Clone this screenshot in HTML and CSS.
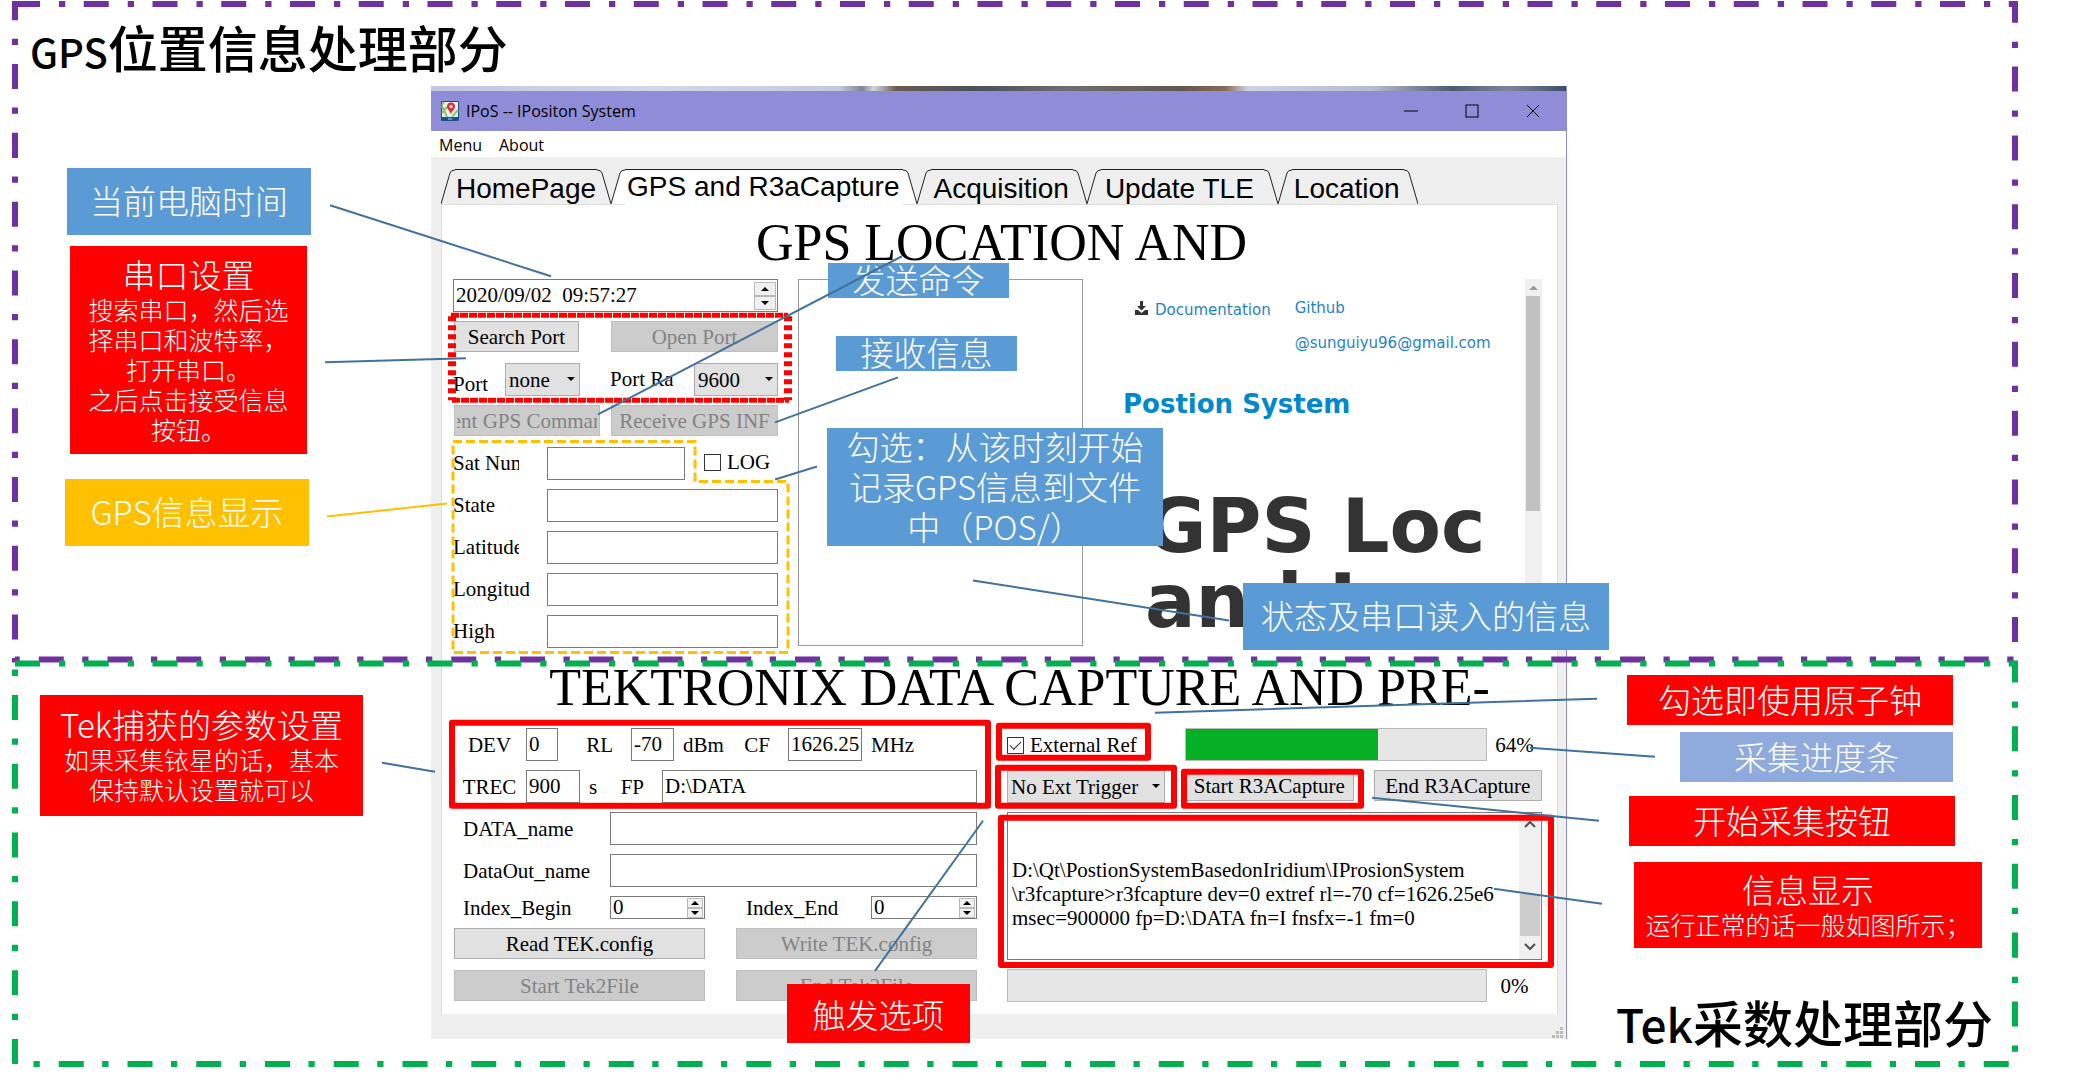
FILE: index.html
```html
<!DOCTYPE html>
<html lang="zh-CN">
<head>
<meta charset="utf-8">
<title>IPoS -- IPositon System</title>
<link rel="stylesheet" href="styles.css">
</head>
<body>
<main class="slide">
  <aside class="notes notes-left">
    <h1 class="heading"><span class="latin">GPS</span>位置信息处理部分</h1>
    <div class="callout blue time-note">当前电脑时间</div>
    <div class="callout red serial-note">串口设置<small>搜索串口，然后选<br>择串口和波特率，<br>打开串口。<br>之后点击接受信息<br>按钮。</small></div>
    <div class="callout yellow gps-note">GPS信息显示</div>
    <div class="callout red tek-note">Tek捕获的参数设置<small>如果采集铱星的话，基本<br>保持默认设置就可以</small></div>
  </aside>

  <div class="window">
    <div class="desktop-strip"></div>
    <header class="titlebar">
      <svg class="app-icon" viewBox="0 0 18 20" aria-hidden="true">
        <rect width="18" height="20" rx="1" fill="#1d4f86"/>
        <rect x="1" y="1" width="16" height="15" fill="#eaf3ee"/>
        <path d="M1 5l5 11M3 1l-2 3M17 9l-6 7M1 12l5-6" stroke="#8cc76a" stroke-width="2" fill="none"/>
        <path d="M10 13C8 9 6 8 6 5.500a4 4 0 0 1 8 0C14 8 11 10 10 13z" fill="#e0313c"/>
        <circle cx="10" cy="5.500" r="1.500" fill="#fff"/>
        <rect x="7" y="17" width="4" height="2" fill="#4f9bd8"/>
      </svg>
      <span class="window-title">IPoS -- IPositon System</span>
      <div class="window-controls">
        <button aria-label="Minimize"><svg viewBox="0 0 14 14"><path d="M0 7h14"/></svg></button>
        <button aria-label="Maximize"><svg viewBox="0 0 14 14"><rect x="1" y="1" width="12" height="12"/></svg></button>
        <button aria-label="Close"><svg viewBox="0 0 14 14"><path d="M1 1l12 12M13 1L1 13"/></svg></button>
      </div>
    </header>
    <nav class="menubar"><button>Menu</button><button>About</button></nav>

    <div class="tabs" role="tablist">
      <button class="tab first" role="tab"><svg viewBox="0 0 14 35"><path d="M0 35L9 4Q10 1 14 1V35z"/><path class="edge" d="M0 35L9 4Q10 1 14 1"/></svg><span>HomePage</span><svg viewBox="0 0 14 35"><path d="M14 35L5 4Q4 1 0 1V35z"/><path class="edge" d="M14 35L5 4Q4 1 0 1"/></svg></button>
      <button class="tab active" role="tab" aria-selected="true"><svg viewBox="0 0 14 35"><path d="M0 35L9 4Q10 1 14 1V35z"/><path class="edge" d="M0 35L9 4Q10 1 14 1"/></svg><span>GPS and R3aCapture</span><svg viewBox="0 0 14 35"><path d="M14 35L5 4Q4 1 0 1V35z"/><path class="edge" d="M14 35L5 4Q4 1 0 1"/></svg></button>
      <button class="tab" role="tab"><svg viewBox="0 0 14 35"><path d="M0 35L9 4Q10 1 14 1V35z"/><path class="edge" d="M0 35L9 4Q10 1 14 1"/></svg><span>Acquisition</span><svg viewBox="0 0 14 35"><path d="M14 35L5 4Q4 1 0 1V35z"/><path class="edge" d="M14 35L5 4Q4 1 0 1"/></svg></button>
      <button class="tab roomy" role="tab"><svg viewBox="0 0 14 35"><path d="M0 35L9 4Q10 1 14 1V35z"/><path class="edge" d="M0 35L9 4Q10 1 14 1"/></svg><span>Update TLE</span><svg viewBox="0 0 14 35"><path d="M14 35L5 4Q4 1 0 1V35z"/><path class="edge" d="M14 35L5 4Q4 1 0 1"/></svg></button>
      <button class="tab" role="tab"><svg viewBox="0 0 14 35"><path d="M0 35L9 4Q10 1 14 1V35z"/><path class="edge" d="M0 35L9 4Q10 1 14 1"/></svg><span>Location</span><svg viewBox="0 0 14 35"><path d="M14 35L5 4Q4 1 0 1V35z"/><path class="edge" d="M14 35L5 4Q4 1 0 1"/></svg></button>
    </div>

    <div class="pane">
      <h2 class="title gps-title">GPS LOCATION AND</h2>
      <section class="gps">
        <form class="stack">
          <div class="row spin"><input type="text" aria-label="Date and time" value="2020/09/02&nbsp; 09:57:27"><span class="steps"><button type="button" class="up" aria-label="Later"></button><button type="button" class="down" aria-label="Earlier"></button></span></div>
          <div class="row ports"><button type="button" class="btn search">Search Port</button><button type="button" class="btn wide" disabled>Open Port</button></div>
          <div class="row">
            <label class="port-label" for="port">Port</label>
            <span class="select port"><select id="port"><option>none</option></select></span>
            <label class="rate-label" for="rate">Port Rate</label>
            <span class="select rate"><select id="rate"><option>9600</option></select></span>
          </div>
          <div class="row commands"><button type="button" class="btn send" disabled><span class="clip">Sent GPS Command</span></button><button type="button" class="btn wide" disabled>Receive GPS INF</button></div>
          <div class="row"><label class="name" for="sat"><span>Sat Num</span></label><input class="field sat" id="sat" type="text"><label class="check log"><input type="checkbox">LOG</label></div>
          <div class="row"><label class="name" for="state"><span>State</span></label><input class="field grow" id="state" type="text"></div>
          <div class="row"><label class="name" for="lat"><span>Latitude</span></label><input class="field grow" id="lat" type="text"></div>
          <div class="row"><label class="name" for="lon"><span class="long">Longitude</span></label><input class="field grow" id="lon" type="text"></div>
          <div class="row"><label class="name" for="high"><span>High</span></label><input class="field grow" id="high" type="text"></div>
        </form>
        <textarea class="serial-log" aria-label="Serial log"></textarea>
        <div class="web">
          <div class="web-page">
            <div class="links">
              <a href="#documentation"><svg viewBox="0 0 13 14" aria-hidden="true"><path d="M5 0h3v5h3L6.500 9.500 2 5h3zM0 9h3l3.500 3L10 9h3v5H0z" fill="#333"/></svg>Documentation</a>
              <div class="contact"><a href="#github">Github</a><a href="#mail">@sunguiyu96@gmail.com</a></div>
            </div>
            <a class="brand" href="#system">Postion System</a>
            <p class="hero">GPS Loc<br>and I</p>
          </div>
          <div class="web-scroll"><i></i><b></b></div>
        </div>
      </section>

      <h2 class="title tek-title">TEKTRONIX DATA CAPTURE AND PRE-</h2>
      <section class="tek">
        <form class="stack">
          <div class="row">
            <label class="lead" for="dev">DEV</label><input class="field w-dev" id="dev" type="text" value="0">
            <label class="tag tag-rl" for="rl">RL</label><input class="field w-rl" id="rl" type="text" value="-70"><span class="unit unit-dbm">dBm</span>
            <label class="tag" for="cf">CF</label><input class="field w-cf" id="cf" type="text" value="1626.25"><span class="unit">MHz</span>
          </div>
          <div class="row">
            <label class="lead" for="trec">TREC</label><input class="field w-trec" id="trec" type="text" value="900"><span class="unit unit-s">s</span>
            <label class="tag" for="fp">FP</label><input class="field grow" id="fp" type="text" value="D:\DATA">
          </div>
          <div class="row"><label class="file" for="data">DATA_name</label><input class="field grow" id="data" type="text"></div>
          <div class="row"><label class="file" for="out">DataOut_name</label><input class="field grow" id="out" type="text"></div>
          <div class="row short">
            <label class="file" for="begin">Index_Begin</label><div class="spin small begin"><input id="begin" type="text" value="0"><span class="steps"><button type="button" class="up" aria-label="Increase begin"></button><button type="button" class="down" aria-label="Decrease begin"></button></span></div>
            <label class="end-label" for="end">Index_End</label><div class="spin small grow"><input id="end" type="text" value="0"><span class="steps"><button type="button" class="up" aria-label="Increase end"></button><button type="button" class="down" aria-label="Decrease end"></button></span></div>
          </div>
          <div class="row pair"><button type="button" class="btn">Read TEK.config</button><button type="button" class="btn" disabled>Write TEK.config</button></div>
          <div class="row pair"><button type="button" class="btn" disabled>Start Tek2File</button><button type="button" class="btn" disabled>End Tek2File</button></div>
        </form>
        <div class="stack">
          <div class="row capture"><label class="check"><input type="checkbox" checked>External Ref</label><progress max="100" value="64" aria-label="Capture progress"></progress><span class="percent">64%</span></div>
          <div class="row actions"><span class="select"><select aria-label="Trigger"><option>No Ext Trigger</option></select></span><button type="button" class="btn">Start R3ACapture</button><button type="button" class="btn">End R3ACapture</button></div>
          <div class="console">
            <pre>D:\Qt\PostionSystemBasedonIridium\IProsionSystem
\r3fcapture&gt;r3fcapture dev=0 extref rl=-70 cf=1626.25e6
msec=900000 fp=D:\DATA fn=I fnsfx=-1 fm=0</pre>
            <div class="console-scroll"><svg viewBox="0 0 12 8"><path d="M1 7l5-5 5 5"/></svg><b></b><svg viewBox="0 0 12 8"><path d="M1 1l5 5 5-5"/></svg></div>
          </div>
          <div class="row convert"><progress max="100" value="0" aria-label="Conversion progress"></progress><span class="percent">0%</span></div>
        </div>
      </section>
    </div>
    <footer class="statusbar"><svg viewBox="0 0 12 12" aria-hidden="true"><path d="M8 0h3v3H8zM4 4h3v3H4zM8 4h3v3H8zM0 8h3v3H0zM4 8h3v3H4zM8 8h3v3H8z" fill="#bdbdbd"/></svg></footer>

    <div class="callout blue over send-note">发送命令</div>
    <div class="callout blue over receive-note">接收信息</div>
    <div class="callout blue over log-note">勾选：从该时刻开始<br>记录GPS信息到文件<br>中（POS/）</div>
    <div class="callout blue over status-note">状态及串口读入的信息</div>
    <div class="callout red over trigger-note">触发选项</div>
  </div>

  <aside class="notes notes-right">
    <div class="callout red clock-note">勾选即使用原子钟</div>
    <div class="callout pale progress-note">采集进度条</div>
    <div class="callout red start-note">开始采集按钮</div>
    <div class="callout red info-note">信息显示<small>运行正常的话一般如图所示；</small></div>
    <h1 class="heading"><span class="latin">Tek</span>采数处理部分</h1>
  </aside>

  <svg class="marks" viewBox="0 0 2086 1080" preserveAspectRatio="none" aria-hidden="true">
    <g fill="none">
      <g stroke-width="6" stroke-dasharray="100 76 25 74">
        <rect x="15" y="4" width="2000" height="655" pathLength="21240" stroke="#7030a0"/>
        <rect x="15" y="663" width="2000" height="400" pathLength="19200" stroke="#00b050"/>
      </g>
      <g stroke="#ff0000" stroke-width="6" stroke-linejoin="round">
        <rect x="452" y="722" width="536" height="83"/>
        <rect x="999" y="725" width="149" height="32"/>
        <rect x="998" y="767" width="176" height="38"/>
        <rect x="1184" y="771" width="177" height="34"/>
        <rect x="1001" y="817" width="550" height="147"/>
      </g>
      <g stroke="#ff0000">
        <path d="M451 315H788M452 400H789" stroke-width="5" stroke-dasharray="8 1"/>
        <path d="M452 316V400M788 316V400" stroke-width="8" stroke-dasharray="5 4"/>
      </g>
      <path d="M453 441H695V481H788V652H453z" stroke="#ffc000" stroke-width="3" stroke-dasharray="9 4"/>
      <path d="M327 516L447 503" stroke="#ffc000" stroke-width="2"/>
      <path d="M330 205L551 276M325 362L466 358M598 414L902 256M775 422L898 377M775 479L817 466M973 580L1229 620M382 762L435 771M1155 712L1597 698M1530 747L1655 756M1372 797L1599 820M1494 888L1602 903M875 970L983 820" stroke="#41719c" stroke-width="2"/>
    </g>
  </svg>
</main>
</body>
</html>
```
FILE: styles.css
```css
* { box-sizing: border-box; }

body {
  margin: 0;
  background: #fff;
  color: #000;
  font-family: "Liberation Serif", "Noto Sans CJK SC", serif;
  font-size: 21px;
}

button, input, select, textarea { font: inherit; color: inherit; margin: 0; }

.slide {
  position: relative;
  display: grid;
  grid-template-columns: 431fr 1136fr 519fr;
  align-items: start;
  overflow: hidden;
}

.marks {
  position: absolute;
  inset: 0;
  width: 100%;
  height: 100%;
  pointer-events: none;
  z-index: 3;
}

/* Notes around the window */
.notes {
  display: flex;
  flex-direction: column;
  align-items: flex-start;
  min-width: 0;
  font-family: "Noto Sans CJK SC", sans-serif;
}

.heading {
  margin: 0;
  font-size: 50px;
  line-height: 60px;
  font-weight: 500;
  white-space: nowrap;
}

.heading .latin { font-size: 40px; line-height: 40px; }
.notes-right .latin { font-size: 46px; }

.callout {
  display: flex;
  flex-direction: column;
  justify-content: center;
  padding-bottom: 3px;
  color: #fff;
  font-family: "Noto Sans CJK SC", sans-serif;
  font-size: 33px;
  line-height: 40px;
  font-weight: 300;
  text-align: center;
  white-space: nowrap;
}

.callout small { font-size: 25px; line-height: 30px; }

.blue { background: #5b9bd5; }
.red { background: #ff0000; }
.yellow { background: #ffc000; }
.pale { background: #8faadc; }

.notes-left { padding: 16px 0 0 30px; }
.time-note { margin: 92px 0 0 37px; width: 244px; height: 67px; }
.serial-note { margin: 11px 0 0 40px; width: 237px; height: 208px; }
.gps-note { margin: 25px 0 0 35px; width: 244px; height: 67px; }
.tek-note { margin: 149px 0 0 10px; width: 323px; height: 121px; }

.notes-right { padding: 675px 0 0 49px; }
.clock-note { margin-left: 11px; width: 326px; height: 50px; }
.progress-note { margin: 7px 0 0 64px; width: 273px; height: 50px; }
.start-note { margin: 14px 0 0 13px; width: 326px; height: 50px; }
.info-note { margin: 16px 0 43px 18px; width: 348px; height: 86px; }

.over { position: absolute; z-index: 2; }
.send-note { left: 397px; top: 177px; width: 181px; height: 35px; }
.receive-note { left: 405px; top: 250px; width: 181px; height: 35px; }
.log-note { left: 396px; top: 342px; width: 336px; height: 118px; }
.status-note { left: 812px; top: 497px; width: 366px; height: 67px; }
.trigger-note { left: 356px; top: 898px; width: 183px; height: 59px; padding: 0; }

/* Application window */
.window {
  position: relative;
  margin: 86px 0 42px;
  min-width: 0;
  background: #efefef;
  border-right: 1px solid #8f8dd8;
}

.desktop-strip {
  height: 5px;
  background: linear-gradient(90deg, #c3c5e2, #d5d6e8 20%, #c2c9dc 36%, #7c8796 38%, #d2d5df 39%, #6a5b52 41%, #4c5158 48%, #6f6d70 56%, #5f574f 66%, #8b6a55 70%, #cfd3e4 72%, #b4bccd 83%, #4c5b74 90%, #7c879f 95%, #3e4d66);
}

.titlebar {
  display: flex;
  align-items: center;
  height: 40px;
  padding: 0 3px 0 10px;
  background: #8f8dd8;
  font-family: "Open Sans", sans-serif;
  font-size: 16px;
}

.app-icon { width: 18px; height: 20px; margin-right: 7px; }
.window-title { flex: 1; }
.window-controls { display: flex; }
.window-controls button {
  display: grid;
  place-items: center;
  width: 61px;
  height: 40px;
  padding: 0;
  border: 0;
  background: none;
}
.window-controls svg { width: 14px; height: 14px; fill: none; stroke: #000; stroke-width: 1; }

.menubar {
  display: flex;
  gap: 17px;
  height: 26px;
  padding-left: 8px;
  background: #fff;
}
.menubar button {
  padding: 0;
  border: 0;
  background: none;
  font-family: "Open Sans", sans-serif;
  font-size: 16px;
  line-height: 28px;
}

.tabs { display: flex; padding: 12px 0 0 10px; }
.tab {
  position: relative;
  display: flex;
  height: 35px;
  padding: 0;
  border: 0;
  background: none;
  font-family: "Liberation Sans", sans-serif;
  font-size: 28px;
  line-height: 37px;
}
.tab span { height: 35px; padding: 0 4px 0 2px; border-top: 1px solid #222; background: #efefef; }
.tab svg { width: 14px; height: 35px; fill: #efefef; }
.tab .edge { fill: none; stroke: #222; stroke-width: 1; }
.tab.first span { padding: 0 1px; }
.tab.roomy span { padding: 0 10px 0 4px; }
.tab.active { z-index: 1; height: 36px; margin-bottom: -1px; }
.tab.active span { background: #fff; height: 36px; line-height: 34px; }
.tab.active svg { fill: #fff; }

.pane {
  margin: 0 8px 0 10px;
  padding: 0 15px 11px 11px;
  background: #fff;
  border: 1px solid #dcdcdc;
  border-bottom: 0;
}

.title {
  margin: 0;
  font-size: 52px;
  font-weight: 400;
  text-align: center;
  white-space: nowrap;
}
.gps-title { padding: 2px 0 0 8px; line-height: 72px; }
.tek-title { padding-left: 44px; line-height: 80px; }

.stack { display: flex; flex-direction: column; gap: 9px; min-width: 0; }
.row { display: flex; align-items: center; height: 33px; white-space: nowrap; }
.row label, .unit { flex: none; }
.tek label, .tek .unit, .percent { padding-top: 2px; }
.grow { flex: 1; }

.gps { display: grid; grid-template-columns: 325px 285px 1fr; gap: 20px; }
.tek { display: grid; grid-template-columns: 524fr 535fr; gap: 30px; }

.field {
  height: 33px;
  min-width: 0;
  padding: 0 6px;
  border: 1px solid #7a7a7a;
  background: #fff;
  border-radius: 0;
}

.btn {
  align-self: start;
  height: 31px;
  padding: 2px 2px 0;
  border: 1px solid #adadad;
  border-radius: 0;
  background: #e1e1e1;
  line-height: 27px;
  min-width: 0;
}
.btn:disabled { background: #cccccc; border-color: #bfbfbf; color: #838383; }
.clip { display: flex; justify-content: center; overflow: hidden; }

.ports, .commands { justify-content: space-between; }
.search { width: 125px; margin-left: 1px; }
.send { width: 146px; margin-left: 1px; }
.wide { width: 167px; }

.spin { display: flex; min-width: 0; border: 1px solid #7a7a7a; background: #fff; padding-right: 1px; }
.spin input { flex: 1; width: 0; min-width: 0; border: 0; padding: 0 2px; background: none; }
.steps { display: flex; flex-direction: column; }
.steps button {
  display: grid;
  place-items: center;
  width: 22px;
  height: 14px;
  padding: 0;
  border: 1px solid #b9b9b9;
  background: #f0f0f0;
}
.steps button::before { content: ""; border: 4px solid transparent; }
.steps .up::before { border-top: 0; border-bottom-color: #000; }
.steps .down::before { border-bottom: 0; border-top-color: #000; }
.small { height: 23px; align-items: center; }
.small input { height: 21px; }
.small .steps button { width: 16px; height: 10px; }

.select { position: relative; display: block; height: 33px; }
.select select {
  width: 100%;
  height: 33px;
  padding: 0 3px;
  border: 1px solid #adadad;
  border-radius: 0;
  background: #e1e1e1;
  appearance: none;
}
.select::after {
  content: "";
  position: absolute;
  right: 5px;
  top: 14px;
  border: 4px solid transparent;
  border-top-color: #000;
  border-bottom: 0;
}
.port-label { width: 52px; padding-top: 10px; }
.port { width: 75px; }
.rate-label { width: 63px; margin: 0 21px 0 30px; overflow: hidden; }
.rate { flex: 1; }

.name { width: 94px; }
.name span { display: block; width: 66px; overflow: hidden; }
.name .long { width: 76px; }
.sat { width: 138px; }

.check { display: flex; align-items: center; }
.check input {
  display: grid;
  place-items: center;
  width: 17px;
  height: 17px;
  margin-right: 6px;
  border: 1px solid #333;
  background: #fff;
  appearance: none;
}
.check input:checked::before {
  content: "";
  width: 10px;
  height: 5px;
  margin-bottom: 4px;
  border: solid #333;
  border-width: 0 0 1px 1px;
  transform: rotate(-45deg);
}
.log { margin-left: 19px; padding-bottom: 2px; }

.serial-log {
  height: 367px;
  border: 1px solid #9a9a9a;
  background: #fff;
  resize: none;
}

.web {
  display: flex;
  height: 367px;
  font-family: "DejaVu Sans", sans-serif;
  font-size: 15px;
  overflow: hidden;
}
.web-page { flex: 1; padding: 20px 0 0 20px; min-width: 0; }
.web a { color: #1f83c6; text-decoration: none; }
.links { display: flex; gap: 24px; padding-left: 12px; line-height: 18px; }
.links svg { width: 13px; height: 14px; margin-right: 7px; }
.links > a { padding-top: 2px; }
.contact { display: flex; flex-direction: column; gap: 17px; }
.web .brand {
  display: block;
  margin-top: 33px;
  color: #0088cc;
  font-size: 26px;
  line-height: 38px;
  font-weight: 700;
}
.hero {
  margin: 66px 0 0;
  padding-left: 22px;
  color: #333;
  font-size: 75px;
  line-height: 75px;
  font-weight: 700;
  white-space: nowrap;
}
.web-scroll { width: 17px; background: #f0f0f0; }
.web-scroll i { display: block; margin: 7px 4px 6px; border: 4px solid transparent; border-top: 0; border-bottom-color: #9a9a9a; }
.web-scroll b { display: block; height: 215px; margin: 0 2px 0 1px; background: #c1c1c1; }

.lead { width: 73px; text-align: center; }
.tag { width: 42px; padding-right: 18px; display: flex; justify-content: flex-end; }
.tag-rl { width: 73px; }
.unit { padding-left: 9px; }
.unit-dbm { width: 72px; }
.unit-s { width: 40px; }
.w-dev { width: 32px; padding: 0 0 0 2px; }
.w-rl { width: 43px; padding: 0 0 0 2px; }
.w-cf { width: 74px; padding: 0 0 0 2px; }
.w-trec { width: 54px; padding: 0 0 0 2px; }
#fp { padding: 0 2px; }

.file { width: 157px; padding-left: 10px; }
.short { height: 23px; }
.begin { width: 95px; }
.end-label { width: 166px; padding-left: 41px; }
.pair { display: grid; grid-template-columns: 251fr 241fr; gap: 31px; padding-left: 1px; }

.capture { display: grid; grid-template-columns: 178px 1fr 55px; }
.actions { display: grid; grid-template-columns: 158px 1fr 1fr; gap: 20px; }
.convert { display: grid; grid-template-columns: 1fr 55px; }
.percent { text-align: center; }

progress {
  width: 100%;
  height: 33px;
  border: 1px solid #bcbcbc;
  background: #e6e6e6;
  appearance: none;
}
progress::-webkit-progress-bar { background: #e6e6e6; }
progress::-webkit-progress-value { background: #06b025; }

.console {
  display: flex;
  height: 148px;
  border: 1px solid #7a7a7a;
  background: #fff;
}
.console pre {
  flex: 1;
  min-width: 0;
  margin: 0;
  padding: 45px 0 0 4px;
  font-family: "Liberation Serif", serif;
  font-size: 21px;
  line-height: 24px;
}
.console-scroll {
  display: flex;
  flex-direction: column;
  align-items: center;
  width: 22px;
  padding: 7px 0 8px;
  background: #f0f0f0;
}
.console-scroll svg { width: 12px; height: 8px; fill: none; stroke: #505050; stroke-width: 2; }
.console-scroll b { width: 20px; height: 42px; margin: auto 0 7px; background: #cdcdcd; }

.statusbar { display: flex; justify-content: flex-end; align-items: flex-end; height: 25px; padding: 0 2px 0 0; }
.statusbar svg { width: 12px; height: 12px; }
```
